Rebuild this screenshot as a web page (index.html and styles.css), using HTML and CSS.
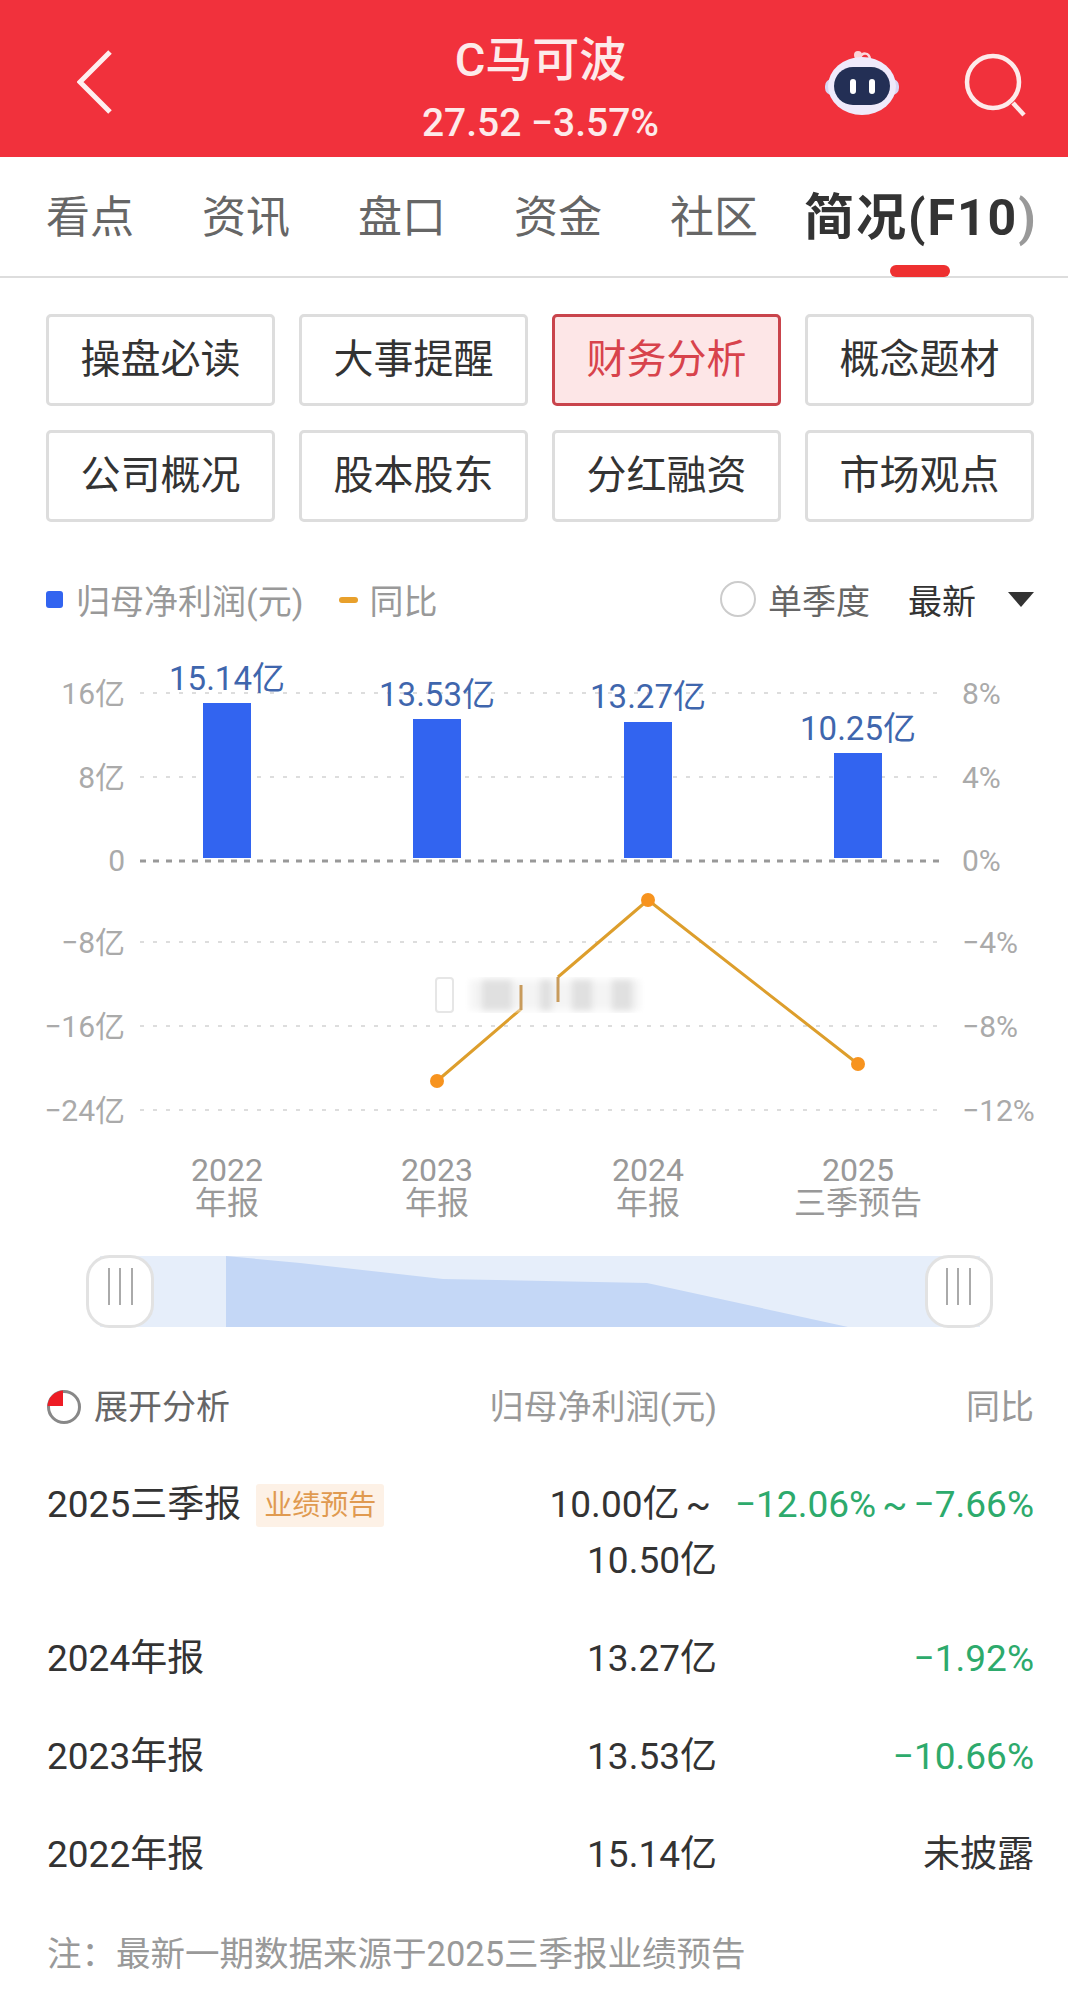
FILE: index.html
```html
<!DOCTYPE html>
<html lang="zh-CN">
<head>
  <meta charset="UTF-8" />
  <title>C马可波 - 简况(F10)</title>
  <link rel="stylesheet" href="styles.css">
</head>
<body>
  <header class="topbar">
    <svg class="back" width="36" height="64" viewBox="0 0 36 64">
      <path d="M33 2 L3 32 L33 62" />
    </svg>
    <div class="stock">
      <div class="stock-name">C马可波</div>
      <div class="stock-price">27.52 −3.57%</div>
    </div>
    <svg class="robot" width="74" height="66" viewBox="0 0 74 66">
      <path class="robot-wire" d="M35 9 C37 3 44 3 45 10" />
      <circle class="robot-ball" cx="33" cy="6" r="4" />
      <rect class="robot-ear" x="0" y="30" width="74" height="16" rx="7" />
      <ellipse class="robot-head" cx="37" cy="37" rx="34" ry="29" />
      <rect class="robot-face" x="9" y="18" width="56" height="38" rx="19" />
      <rect class="robot-eye" x="25" y="30" width="6" height="15" rx="3" />
      <rect class="robot-eye" x="44" y="30" width="6" height="15" rx="3" />
    </svg>
    <svg class="search" width="64" height="66" viewBox="0 0 64 66">
      <circle cx="29" cy="29" r="26" />
      <path d="M49 50 L60 62" />
    </svg>
  </header>

  <nav class="tabs">
    <span class="tab">看点</span>
    <span class="tab">资讯</span>
    <span class="tab">盘口</span>
    <span class="tab">资金</span>
    <span class="tab">社区</span>
    <span class="tab tab-active">简况(F10<span class="tab-fade">)</span></span>
  </nav>

  <section class="chips">
    <div class="chip">操盘必读</div>
    <div class="chip">大事提醒</div>
    <div class="chip chip-active">财务分析</div>
    <div class="chip">概念题材</div>
    <div class="chip">公司概况</div>
    <div class="chip">股本股东</div>
    <div class="chip">分红融资</div>
    <div class="chip">市场观点</div>
  </section>

  <section class="legend">
    <span class="legend-bar"></span>
    <span class="legend-label">归母净利润(元)</span>
    <span class="legend-line"></span>
    <span class="legend-label">同比</span>
    <span class="radio"></span>
    <span class="legend-quarter">单季度</span>
    <span class="legend-latest">最新</span>
    <span class="caret"></span>
  </section>

  <svg class="chart" width="1068" height="728" viewBox="0 630 1068 728">
    <defs>
      <filter id="smear" x="-10%" y="-10%" width="120%" height="120%">
        <feGaussianBlur stdDeviation="3" />
      </filter>
    </defs>

    <!-- grid -->
    <line class="grid" x1="140" y1="693" x2="943" y2="693" />
    <line class="grid" x1="140" y1="777" x2="943" y2="777" />
    <line class="grid" x1="140" y1="942" x2="943" y2="942" />
    <line class="grid" x1="140" y1="1026" x2="943" y2="1026" />
    <line class="grid" x1="140" y1="1110" x2="943" y2="1110" />

    <!-- bars -->
    <rect class="bar" x="203" y="703" width="48" height="155" />
    <rect class="bar" x="413" y="719" width="48" height="139" />
    <rect class="bar" x="624" y="722" width="48" height="136" />
    <rect class="bar" x="834" y="753" width="48" height="105" />
    <line class="baseline" x1="140" y1="861" x2="943" y2="861" />

    <!-- left axis -->
    <text class="axis axis-left" x="125" y="704">16亿</text>
    <text class="axis axis-left" x="125" y="788">8亿</text>
    <text class="axis axis-left" x="125" y="871">0</text>
    <text class="axis axis-left" x="125" y="953">−8亿</text>
    <text class="axis axis-left" x="125" y="1037">−16亿</text>
    <text class="axis axis-left" x="125" y="1121">−24亿</text>

    <!-- right axis -->
    <text class="axis" x="962" y="704">8%</text>
    <text class="axis" x="962" y="788">4%</text>
    <text class="axis" x="962" y="871">0%</text>
    <text class="axis" x="962" y="953">−4%</text>
    <text class="axis" x="962" y="1037">−8%</text>
    <text class="axis" x="962" y="1121">−12%</text>

    <!-- bar values -->
    <text class="value" x="227" y="690">15.14亿</text>
    <text class="value" x="437" y="706">13.53亿</text>
    <text class="value" x="648" y="708">13.27亿</text>
    <text class="value" x="858" y="740">10.25亿</text>

    <!-- yoy line, the middle is smudged out in the source -->
    <path class="yoy" d="M437 1081 L521 1009 M558 977 L648 900 L858 1064" />
    <rect class="smudge-glow" x="470" y="980" width="170" height="30" filter="url(#smear)" />
    <g class="smudge" filter="url(#smear)">
      <rect x="482" y="980" width="30" height="30" />
      <rect x="540" y="980" width="12" height="30" />
      <rect x="572" y="980" width="20" height="30" />
      <rect x="612" y="980" width="20" height="30" />
    </g>
    <rect class="smudge-box" x="436" y="978" width="17" height="34" rx="3" />
    <line class="smudge-line" x1="521" y1="985" x2="521" y2="1010" />
    <line class="smudge-line" x1="558" y1="977" x2="558" y2="1002" />
    <circle class="dot" cx="437" cy="1081" r="7" />
    <circle class="dot" cx="648" cy="900" r="7" />
    <circle class="dot" cx="858" cy="1064" r="7" />

    <!-- x axis -->
    <text class="xlabel"><tspan x="227" y="1181">2022</tspan><tspan x="227" y="1214">年报</tspan></text>
    <text class="xlabel"><tspan x="437" y="1181">2023</tspan><tspan x="437" y="1214">年报</tspan></text>
    <text class="xlabel"><tspan x="648" y="1181">2024</tspan><tspan x="648" y="1214">年报</tspan></text>
    <text class="xlabel"><tspan x="858" y="1181">2025</tspan><tspan x="858" y="1214">三季预告</tspan></text>

    <!-- range slider -->
    <rect class="slider-track" x="100" y="1256" width="880" height="71" />
    <path class="slider-area" d="M226 1256 L300 1263 L443 1279 L647 1283 L848 1327 L226 1327 Z" />
    <rect class="slider-handle" x="87.500" y="1256.500" width="65" height="70" rx="22" />
    <rect class="slider-handle" x="926.500" y="1256.500" width="65" height="70" rx="22" />
    <path class="slider-grip" d="M109 1268 V1305 M120 1268 V1305 M132 1268 V1305 M947 1268 V1305 M958 1268 V1305 M970 1268 V1305" />
  </svg>

  <section class="table">
    <div class="thead">
      <div class="col-name expand">
        <svg class="pie" width="36" height="36" viewBox="0 0 36 36">
          <circle cx="18" cy="18" r="15.500" />
          <path d="M17 1.500 V17 H1.500 C2 8.500 8 2.500 17 1.500 Z" />
        </svg>
        <span>展开分析</span>
      </div>
      <div class="col-profit">归母净利润(元)</div>
      <div class="col-yoy">同比</div>
    </div>
    <div class="row">
      <div class="col-name">2025三季报<span class="tag">业绩预告</span></div>
      <div class="col-profit">10.00亿 ~&nbsp; 10.50亿</div>
      <div class="col-yoy down">−12.06% ~ −7.66%</div>
    </div>
    <div class="row">
      <div class="col-name">2024年报</div>
      <div class="col-profit">13.27亿</div>
      <div class="col-yoy down">−1.92%</div>
    </div>
    <div class="row">
      <div class="col-name">2023年报</div>
      <div class="col-profit">13.53亿</div>
      <div class="col-yoy down">−10.66%</div>
    </div>
    <div class="row">
      <div class="col-name">2022年报</div>
      <div class="col-profit">15.14亿</div>
      <div class="col-yoy">未披露</div>
    </div>
  </section>

  <p class="note">注：最新一期数据来源于2025三季报业绩预告</p>
</body>
</html>
```

FILE: styles.css
```css
* {
  margin: 0;
  padding: 0;
  box-sizing: border-box;
}
body {
  width: 1068px;
  height: 1993px;
  overflow: hidden;
  background-color: #fff;
  color: #333;
  font-family: Roboto, "Noto Sans CJK SC", sans-serif;
}

/* top bar */
.topbar {
  display: flex;
  align-items: center;
  height: 157px;
  padding: 0 40px 0 77px;
  background-color: #f1313c;
}
.back {
  margin-top: 7px;
  flex: none;
}
.back path {
  fill: none;
  stroke: #fff;
  stroke-width: 5;
  opacity: 0.92;
}
.stock {
  flex: 1;
  padding-top: 31px;
  margin-left: 143px;
  text-align: center;
  color: #fdeaea;
}
.stock-name {
  font-size: 47px;
  font-weight: 500;
  line-height: 56px;
  margin-top: -10px;
}
.stock-price {
  font-size: 39px;
  font-weight: 500;
  line-height: 48px;
  margin-top: 11px;
}
.robot {
  flex: none;
  margin-top: 6px;
  margin-right: 65px;
}
.robot-wire {
  fill: none;
  stroke: #fbd9de;
  stroke-width: 2.500;
}
.robot-ball {
  fill: #fbd5da;
}
.robot-ear {
  fill: #d8d5f3;
}
.robot-head {
  fill: #efeafb;
}
.robot-face {
  fill: #232f55;
}
.robot-eye {
  fill: #fff;
}
.search {
  flex: none;
  margin-top: 14px;
}
.search circle,
.search path {
  fill: none;
  stroke: #fdeaea;
  stroke-width: 4.500;
}

/* tabs */
.tabs {
  display: flex;
  align-items: center;
  height: 121px;
  padding: 0 0 0 46px;
  gap: 68px;
  border-bottom: 2px solid #ddd;
}
.tab {
  padding-top: 2px;
  font-size: 44px;
  color: #666;
  line-height: 118px;
  white-space: nowrap;
}
.tab-active {
  position: relative;
  margin-left: -22px;
  font-size: 50px;
  font-weight: 700;
  letter-spacing: 2px;
  color: #333;
}
.tab-active::after {
  content: "";
  position: absolute;
  left: 86px;
  bottom: 0;
  width: 60px;
  height: 12px;
  border-radius: 6px;
  background-color: #ee3030;
}
.tab-fade {
  color: #999;
}

/* chips */
.chips {
  display: grid;
  grid-template-columns: repeat(4, 229px);
  grid-auto-rows: 92px;
  gap: 24px;
  padding: 36px 34px 0 46px;
}
.chip {
  display: flex;
  align-items: center;
  justify-content: center;
  padding-bottom: 8px;
  font-size: 40px;
  color: #333;
  border: 3px solid #ddd;
  border-radius: 5px;
}
.chip-active {
  color: #d8434c;
  background-color: #fde6e7;
  border-color: #c9444c;
}

/* legend */
.legend {
  display: flex;
  align-items: center;
  height: 60px;
  margin-top: 47px;
  padding: 0 34px 0 46px;
}
.legend-bar {
  width: 17px;
  height: 17px;
  border-radius: 3px;
  background-color: #3264f0;
  margin-right: 13px;
}
.legend-line {
  width: 19px;
  height: 6px;
  border-radius: 3px;
  background-color: #e8a02c;
  margin: 2px 11px 0 36px;
}
.legend-label {
  font-size: 34px;
  color: #999;
}
.radio {
  width: 36px;
  height: 36px;
  margin-left: auto;
  border: 2px solid #ccc;
  border-radius: 50%;
}
.legend-quarter {
  margin-left: 12px;
  font-size: 34px;
  color: #666;
}
.legend-latest {
  margin-left: 38px;
  font-size: 34px;
  color: #333;
}
.caret {
  width: 0;
  height: 0;
  margin-left: 32px;
  border-left: 13.500px solid transparent;
  border-right: 13.500px solid transparent;
  border-top: 15px solid #333;
}

/* chart */
.chart {
  display: block;
  margin-top: 1px;
}
.grid {
  stroke: #ddd;
  stroke-width: 2;
  stroke-dasharray: 4 9;
}
.baseline {
  stroke: #999;
  stroke-width: 3;
  stroke-dasharray: 6 7;
}
.bar {
  fill: #3264f0;
}
.axis {
  font-size: 30px;
  fill: #aaa;
}
.axis-left {
  text-anchor: end;
}
.value {
  font-size: 33px;
  fill: #3f66ad;
  text-anchor: middle;
}
.yoy {
  fill: none;
  stroke: #dd9e2c;
  stroke-width: 3;
}
.dot {
  fill: #f7931e;
}
.smudge-glow {
  fill: #f4f4f4;
}
.smudge rect {
  fill: #e0e0e0;
}
.smudge-box {
  fill: #fff;
  stroke: #e6e6e6;
  stroke-width: 2;
}
.smudge-line {
  stroke: #c89b5c;
  stroke-width: 3;
}
.xlabel {
  font-size: 32px;
  fill: #999;
  text-anchor: middle;
}
.slider-track {
  fill: #e6eefa;
}
.slider-area {
  fill: #c4d7f6;
}
.slider-handle {
  fill: #fff;
  stroke: #e2e2e2;
  stroke-width: 3;
}
.slider-grip {
  fill: none;
  stroke: #aaa;
  stroke-width: 2;
}

/* table */
.table {
  padding: 0 34px 0 47px;
}
.thead,
.row {
  display: flex;
  font-size: 37px;
  line-height: 56px;
  padding: 21px 0;
}
.thead {
  font-size: 34px;
  color: #999;
}
.col-name {
  display: flex;
  flex: 1;
  align-items: center;
  align-self: flex-start;
}
.col-profit {
  flex: none;
  width: 190px;
  text-align: right;
  word-spacing: -3px;
}
.thead .col-profit {
  width: 240px;
}
.col-yoy {
  flex: none;
  width: 317px;
  text-align: right;
  white-space: nowrap;
  word-spacing: -3px;
}
.down {
  color: #2daa6c;
}
.expand {
  color: #666;
  margin-left: -1px;
}
.pie {
  margin-right: 12px;
}
.pie circle {
  fill: none;
  stroke: #888;
  stroke-width: 3;
}
.pie path {
  fill: #ee1c25;
}
.tag {
  margin-left: 15px;
  padding: 0 8px;
  font-size: 28px;
  line-height: 43px;
  color: #e09a50;
  background-color: #fdf1e6;
  border-radius: 3px;
}
.note {
  padding: 0 47px;
  margin-top: 23px;
  font-size: 34.500px;
  line-height: 55px;
  color: #999;
}
```
